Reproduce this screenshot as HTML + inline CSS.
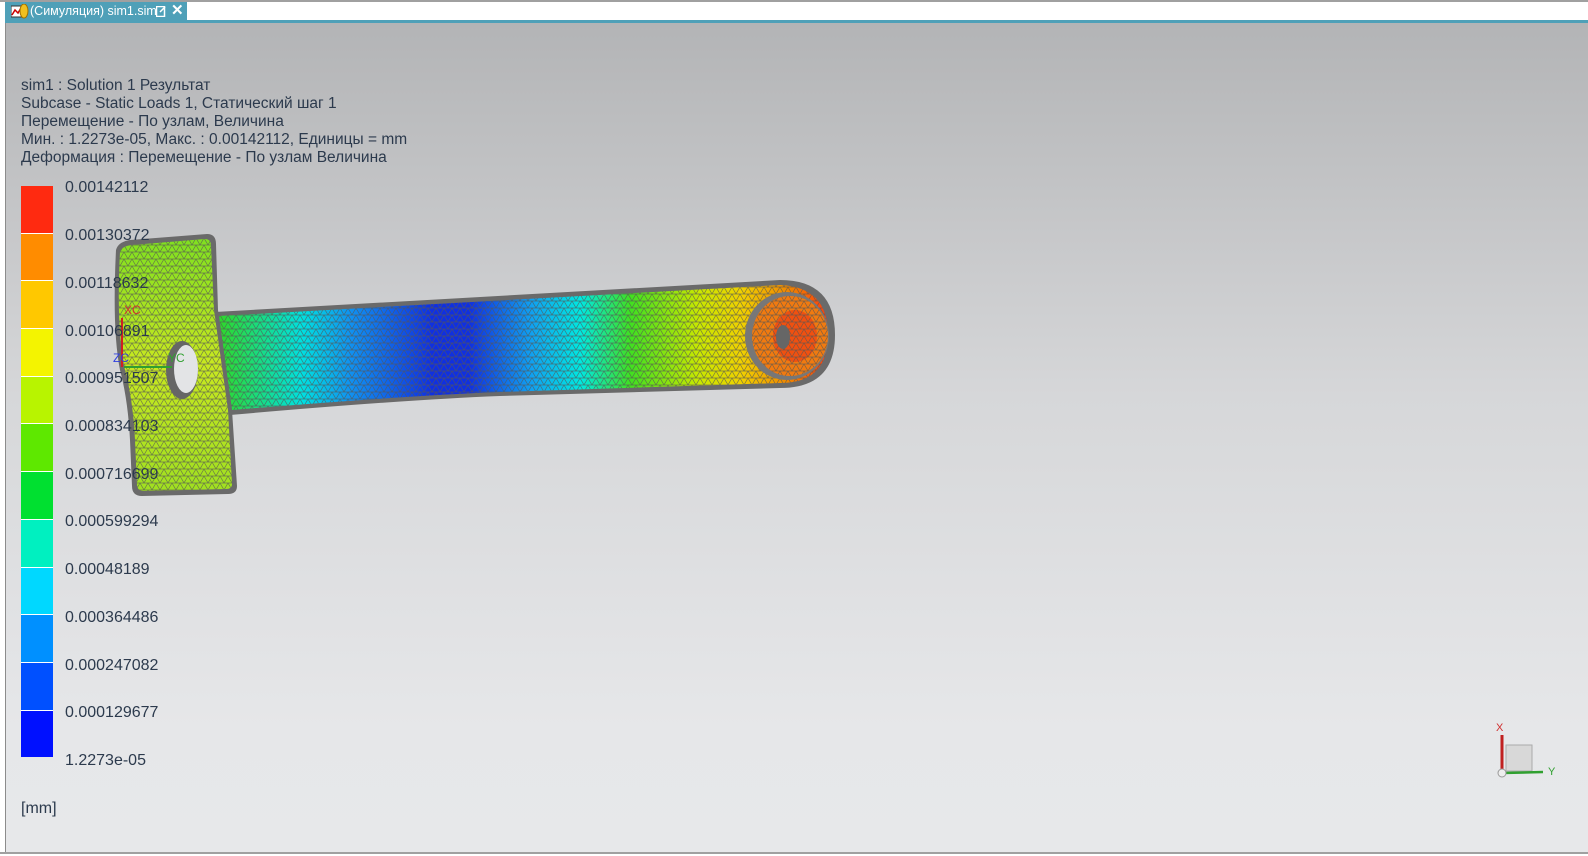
<!DOCTYPE html>
<html><head><meta charset="utf-8"><style>
*{margin:0;padding:0}
body{width:1588px;height:856px;background:#fff;position:relative;overflow:hidden;font-family:"Liberation Sans",sans-serif}
#topline{position:absolute;left:0;top:0;width:1588px;height:2px;background:#a0a0a0}
#tab{position:absolute;left:5px;top:2px;width:182px;height:19px;background:#4fa0b8;color:#fff;font-size:12.5px;line-height:19px}
#tab span.t{position:absolute;left:25px;top:0}
#teal{position:absolute;left:5px;top:20px;width:1583px;height:3px;background:#4fa0b8}
#vp{position:absolute;left:5px;top:23px;width:1583px;height:829px;background:linear-gradient(#b3b4b6,#d6d7d9 45%,#e6e7e9 85%,#e7e8ea);border-left:1px solid #8c8c8c}
#bot{position:absolute;left:0;top:852px;width:1588px;height:2px;background:#a0a0a0}
.info{position:absolute;left:21px;font-size:15.5px;color:#2c3a4d;white-space:nowrap}
.lab{position:absolute;left:65px;font-size:16px;color:#2c3a4d}
#bar{position:absolute;left:21px;top:186px;width:32px;height:572px}
#bar div{height:46.7px;border-bottom:1px solid #fff}
</style></head><body>
<div id="topline"></div>
<div id="tab">
<svg style="position:absolute;left:6px;top:2px" width="18" height="15"><rect x="0" y="2" width="11" height="11" fill="#fff" stroke="#333" stroke-width="1"/><polyline points="1,11 4,6 7,9 10,4" fill="none" stroke="#c00" stroke-width="1.5"/><ellipse cx="13" cy="7" rx="4" ry="7" fill="#f0c020" stroke="#a07000"/></svg>
<span class="t">(Симуляция) sim1.sim</span>
<svg style="position:absolute;left:151px;top:4px" width="10" height="11"><rect x="0.5" y="0.5" width="8" height="10" fill="none" stroke="#fff" stroke-width="1.5"/><path d="M4 6 L9 1" stroke="#fff" stroke-width="1.5"/></svg>
<span style="position:absolute;left:166px;top:-1px;font-weight:bold;font-size:15px">✕</span>
</div>
<div id="teal"></div>
<div id="vp"></div>
<div id="bot"></div>

<div class="info" style="top:77px">sim1 : Solution 1 Результат</div>
<div class="info" style="top:95px">Subcase - Static Loads 1, Статический шаг 1</div>
<div class="info" style="top:113px">Перемещение - По узлам, Величина</div>
<div class="info" style="top:131px">Мин. : 1.2273e-05, Макс. : 0.00142112, Единицы = mm</div>
<div class="info" style="top:149px">Деформация : Перемещение - По узлам Величина</div>

<div id="bar">
<div style="background:#ff2a10"></div><div style="background:#ff8c00"></div><div style="background:#ffc800"></div><div style="background:#f4f400"></div><div style="background:#b8f400"></div><div style="background:#5ee800"></div><div style="background:#00e030"></div><div style="background:#00f0c0"></div><div style="background:#00d8ff"></div><div style="background:#0090ff"></div><div style="background:#0050ff"></div><div style="background:#0010ff;border:0"></div>
</div>

<svg style="position:absolute;left:0;top:0" width="1588" height="856">
<defs>
<linearGradient id="g" x1="215" y1="0" x2="835" y2="0" gradientUnits="userSpaceOnUse">
<stop offset="0" stop-color="#30d820"/><stop offset="0.14" stop-color="#00e0e0"/><stop offset="0.22" stop-color="#1090f0"/><stop offset="0.35" stop-color="#1030e0"/><stop offset="0.41" stop-color="#1030e0"/><stop offset="0.51" stop-color="#10a0f0"/><stop offset="0.59" stop-color="#00e8e0"/><stop offset="0.67" stop-color="#40e020"/><stop offset="0.78" stop-color="#c8e800"/><stop offset="0.85" stop-color="#f0d000"/><stop offset="0.93" stop-color="#f08000"/><stop offset="1" stop-color="#ff3010"/>
</linearGradient>
<linearGradient id="g2" x1="0" y1="240" x2="0" y2="490" gradientUnits="userSpaceOnUse">
<stop offset="0" stop-color="#80e020"/><stop offset="0.5" stop-color="#c8e820"/><stop offset="1" stop-color="#a0e020"/>
</linearGradient>
<pattern id="m" width="8" height="7" patternUnits="userSpaceOnUse">
<path d="M0 0H8M0 7H8M0 7L4 0L8 7" stroke="#555" stroke-width="0.7" fill="none" opacity="0.75"/>
</pattern>
</defs>
<path d="M215 312 L780 280 Q835 280 835 335 Q835 388 780 388 L500 396 Q400 400 230 415 Z" fill="#6a6a6a"/>
<path d="M219 316 L780 285 Q828 287 828 335 Q828 383 780 383 L500 392 Q400 396 232 410 Z" fill="url(#g)"/>
<path d="M219 316 L780 285 Q828 287 828 335 Q828 383 780 383 L500 392 Q400 396 232 410 Z" fill="url(#m)"/>
<ellipse cx="787" cy="336" rx="42" ry="44" fill="#777"/>
<ellipse cx="790" cy="336" rx="38" ry="40" fill="#f07a10"/>
<ellipse cx="795" cy="336" rx="22" ry="26" fill="#f05010"/>
<ellipse cx="790" cy="336" rx="38" ry="40" fill="url(#m)"/>
<ellipse cx="783" cy="337" rx="7" ry="12" fill="#666"/>
<path d="M116 250 Q118 242 130 240 L207 234 Q216 234 216 244 L218 310 L232 410 L237 486 Q237 494 228 494 L142 496 Q132 496 132 486 L130 440 Q128 400 120 370 Q112 330 116 250 Z" fill="#6a6a6a"/>
<path d="M120 252 Q122 246 132 245 L205 239 Q211 239 211 246 L214 310 L228 410 L232 484 Q232 489 226 489 L144 491 Q137 491 137 484 L135 440 Q133 400 125 370 Q116 330 120 252 Z" fill="url(#g2)"/>
<path d="M120 252 Q122 246 132 245 L205 239 Q211 239 211 246 L214 310 L228 410 L232 484 Q232 489 226 489 L144 491 Q137 491 137 484 L135 440 Q133 400 125 370 Q116 330 120 252 Z" fill="url(#m)"/>
<ellipse cx="182" cy="370" rx="16" ry="29" fill="#666"/>
<ellipse cx="186" cy="369" rx="12" ry="24" fill="#e3e4e6"/>
<line x1="122" y1="367" x2="122" y2="318" stroke="#d02020" stroke-width="2"/>
<text x="124" y="314" font-size="12" fill="#d03030" font-family="Liberation Sans">XC</text>
<line x1="124" y1="367" x2="172" y2="367" stroke="#30a030" stroke-width="2"/>
<text x="168" y="362" font-size="12" fill="#30a030" font-family="Liberation Sans">YC</text>
<text x="113" y="362" font-size="12" fill="#3040e0" font-family="Liberation Sans">ZC</text>
<rect x="1506" y="745" width="26" height="26" fill="#d8d8d8" stroke="#aaa"/>
<line x1="1502" y1="773" x2="1502" y2="735" stroke="#c02020" stroke-width="3"/>
<text x="1496" y="731" font-size="11" fill="#d03030" font-family="Liberation Sans">X</text>
<line x1="1502" y1="773" x2="1543" y2="772" stroke="#30a030" stroke-width="2.5"/>
<text x="1548" y="775" font-size="11" fill="#30a030" font-family="Liberation Sans">Y</text>
<circle cx="1502" cy="773" r="4" fill="#eee" stroke="#999"/>
</svg>

<div class="lab" style="top:179px">0.00142112</div>
<div class="lab" style="top:227px">0.00130372</div>
<div class="lab" style="top:275px">0.00118632</div>
<div class="lab" style="top:323px">0.00106891</div>
<div class="lab" style="top:370px">0.000951507</div>
<div class="lab" style="top:418px">0.000834103</div>
<div class="lab" style="top:466px">0.000716699</div>
<div class="lab" style="top:513px">0.000599294</div>
<div class="lab" style="top:561px">0.00048189</div>
<div class="lab" style="top:609px">0.000364486</div>
<div class="lab" style="top:657px">0.000247082</div>
<div class="lab" style="top:704px">0.000129677</div>
<div class="lab" style="top:752px">1.2273e-05</div>
<div class="lab" style="top:800px;left:21px">[mm]</div>
</body></html>
